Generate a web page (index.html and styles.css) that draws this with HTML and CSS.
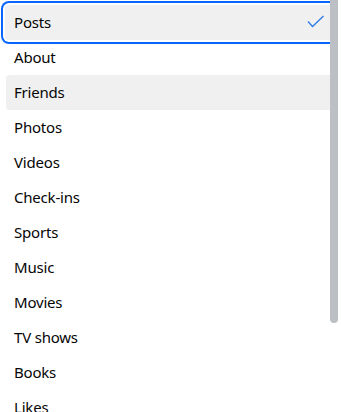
FILE: index.html
```html
<!DOCTYPE html>
<html lang="en">

<head>
  <meta charset="UTF-8" />
  <meta name="viewport" content="width=device-width, initial-scale=1.0"/>
  <title>Profile sections</title>
  <link rel="stylesheet" href="styles.css">
</head>

<body>
  <div class="menu">
    <ul class="list">
      <li class="item selected">
        <span>Posts</span>
        <svg class="check" width="18" height="14" viewBox="0 0 18 14">
          <path d="M1 6.5 L5.5 11.5 L16.5 1" fill="none" stroke="#2d7be6" stroke-width="1.3"/>
        </svg>
      </li>
      <li class="item">About</li>
      <li class="item hover">Friends</li>
      <li class="item">Photos</li>
      <li class="item">Videos</li>
      <li class="item">Check-ins</li>
      <li class="item">Sports</li>
      <li class="item">Music</li>
      <li class="item">Movies</li>
      <li class="item">TV shows</li>
      <li class="item">Books</li>
      <li class="item">Likes</li>
    </ul>
    <div class="scrollbar">
      <div class="thumb"></div>
    </div>
  </div>
</body>

</html>
```

FILE: styles.css
```css
body { margin: 0; padding: 0; background: #ffffff; font-family: 'Noto Sans', 'Open Sans', sans-serif; color: #050505; overflow: hidden; }
.menu { display: flex; height: 412px; }
.list { list-style: none; margin: 0; padding: 5px 0 0 5px; flex-grow: 1; }
.item {
  height: 35px;
  display: flex;
  align-items: center;
  justify-content: space-between;
  padding-left: 9px;
  padding-bottom: 2px;
  box-sizing: border-box;
  font-size: 15px;
  letter-spacing: -0.2px;
  border-radius: 4px 0 0 4px;
}
.item.hover { background: #f0f0f0; margin-left: 1px; padding-left: 8px; }
.item.selected {
  background: #f0f0f0;
  box-shadow: 0 0 0 2px #ffffff, 0 0 0 4px #0866ff;
  border-radius: 4px 0 0 4px;
}
.check { margin-right: 5px; }
.scrollbar { width: 8px; margin-right: 3px; }
.thumb { height: 323px; background: #bcc0c4; border-radius: 0 0 4px 4px; }
```
